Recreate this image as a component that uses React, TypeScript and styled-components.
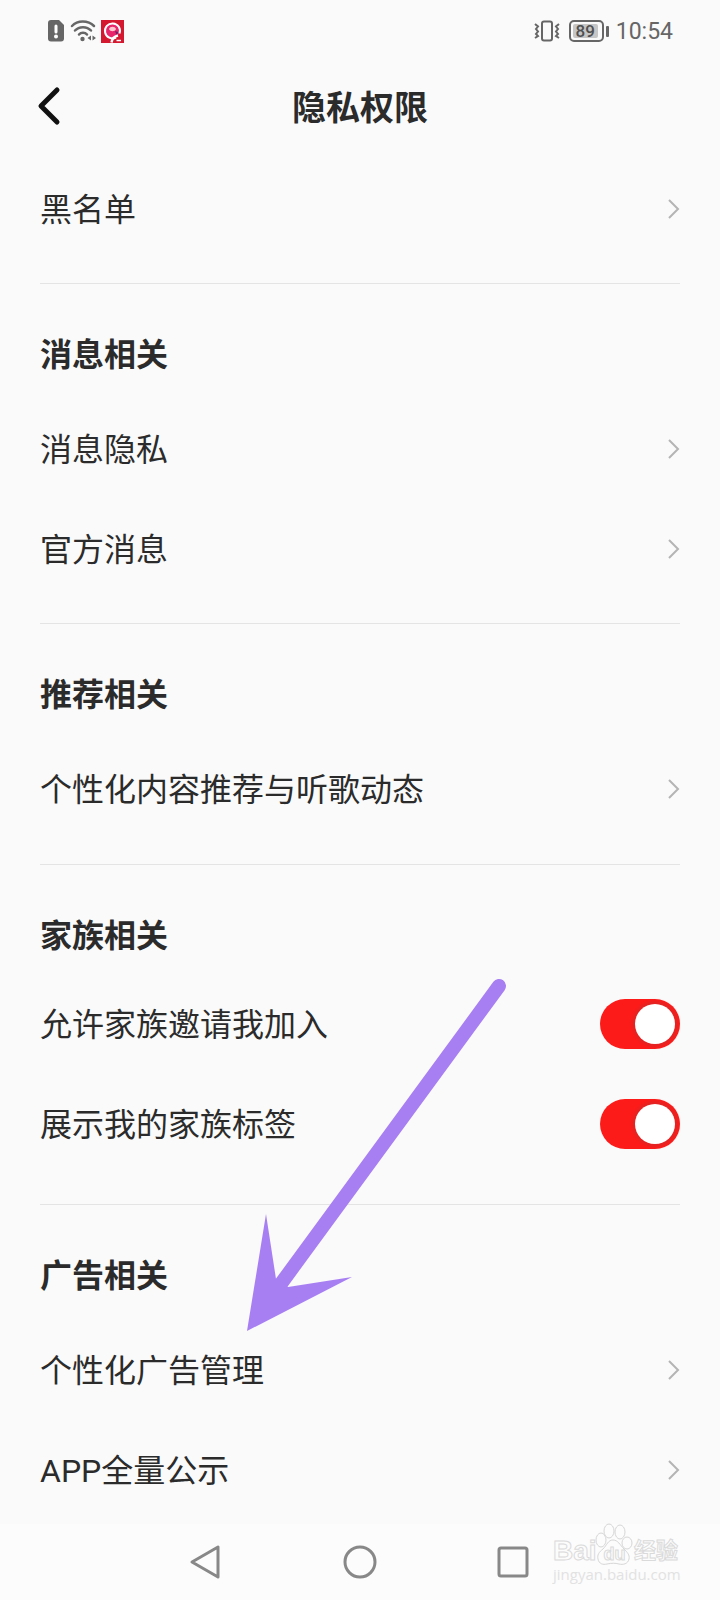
import React, { useId, useState } from 'react';
import styled, { createGlobalStyle } from 'styled-components';

const GlobalStyle = createGlobalStyle`
  *, *::before, *::after { box-sizing: border-box; }
  body {
    margin: 0;
    background: #fafafa;
    color: #2b2b2b;
    font-family: Roboto, "Noto Sans CJK SC", sans-serif;
  }
  button, input { font: inherit; color: inherit; }
`;

const Page = styled.div`
  display: flex;
  flex-direction: column;
  min-height: 100vh;
  overflow-x: hidden;
`;

const StatusBar = styled.div`
  display: flex;
  align-items: center;
  justify-content: space-between;
  height: 62px;
  padding: 0 47px;
  color: #666;
`;

const StatusGroup = styled.div<{ $gap: number }>`
  display: flex;
  align-items: center;
  gap: ${(p) => p.$gap}px;
`;

const Battery = styled.div`
  display: flex;
  align-items: center;
  gap: 2px;
  margin-left: 2px;
  &::after {
    content: "";
    width: 3px;
    height: 11px;
    border-radius: 1px;
    background: #666;
  }
`;

const BatteryBody = styled.div`
  display: flex;
  width: 35px;
  height: 22px;
  padding: 2px;
  border: 2px solid #666;
  border-radius: 5px;
`;

const BatteryLevel = styled.span`
  display: flex;
  align-items: center;
  justify-content: center;
  width: 25px;
  border-radius: 2px;
  background: #c6c6c6;
  color: #505050;
  font-size: 17px;
  font-weight: 500;
  line-height: 14px;
`;

const Clock = styled.time`
  padding-top: 2px;
  font-size: 23px;
  line-height: 28px;
`;

const Header = styled.header`
  display: grid;
  grid-template-columns: 80px 1fr 80px;
  align-items: center;
  height: 90px;
`;

const BackButton = styled.button`
  display: flex;
  align-items: center;
  height: 88px;
  padding: 0 0 2px 36px;
  border: 0;
  background: none;
`;

const Title = styled.h1`
  margin: 0;
  padding-top: 2px;
  text-align: center;
  font-size: 34px;
  font-weight: 700;
  line-height: 48px;
`;

const Main = styled.main`
  flex: 1;
  padding: 7px 40px 0;
`;

const Section = styled.section<{ $end?: number }>`
  position: relative;
  padding-bottom: ${(p) => p.$end ?? 24}px;
  & + & { border-top: 1px solid #e4e4e4; }
  &:last-child { padding-bottom: 4px; }
`;

const SectionTitle = styled.h2<{ $compact?: boolean }>`
  margin: 0;
  padding: 47px 0 ${(p) => (p.$compact ? 14 : 20)}px;
  font-size: 32px;
  font-weight: 700;
  line-height: 48px;
`;

const LinkRow = styled.button`
  display: flex;
  align-items: center;
  justify-content: space-between;
  width: 100%;
  height: 100px;
  padding: 0;
  border: 0;
  background: none;
  text-align: left;
`;

const SwitchRow = styled.div`
  display: flex;
  align-items: center;
  justify-content: space-between;
  height: 100px;
`;

const RowText = styled.span`
  padding-top: 2px;
  font-size: 32px;
  line-height: 48px;
`;

const Switch = styled.input`
  appearance: none;
  display: flex;
  align-items: center;
  width: 80px;
  height: 50px;
  margin: 0;
  padding: 0 5px;
  border-radius: 25px;
  background: #d0d0d0;
  &::before {
    content: "";
    width: 40px;
    height: 40px;
    border-radius: 50%;
    background: #fff;
  }
  &:checked {
    justify-content: flex-end;
    background: #fd1b19;
  }
  &:checked::before { box-shadow: 0 0 3px 3px #e32423; }
`;

const Arrow = styled.svg`
  position: absolute;
  left: 205px;
  bottom: -129px;
  pointer-events: none;
  z-index: 1;
`;

const NavBar = styled.nav`
  position: relative;
  display: flex;
  align-items: center;
  justify-content: center;
  gap: 93px;
  height: 77px;
  padding-bottom: 2px;
  background: #fcfcfc;
`;

const NavButton = styled.button`
  display: flex;
  align-items: center;
  justify-content: center;
  width: 60px;
  height: 60px;
  padding: 0;
  border: 0;
  background: none;
`;

const Watermark = styled.div`
  position: absolute;
  right: 35px;
  top: -2px;
  width: 132px;
  color: #fcfcfc;
  pointer-events: none;
`;

const Brand = styled.div`
  display: flex;
  align-items: flex-end;
  height: 44px;
  font-weight: 700;
  line-height: 30px;
  -webkit-text-stroke: 1px #dadada;
`;

const BrandLatin = styled.span`
  width: 42px;
  font-family: "Liberation Sans", sans-serif;
  font-size: 28px;
`;

const BrandPaw = styled.span`
  position: relative;
  width: 39px;
  height: 44px;
`;

const PawText = styled.span`
  position: absolute;
  inset: 20px 0 0;
  text-align: center;
  font-family: "Liberation Sans", sans-serif;
  font-size: 18px;
  line-height: 24px;
`;

const BrandCjk = styled.span`
  font-size: 22px;
`;

const SiteName = styled.div`
  font-family: "Open Sans", sans-serif;
  font-size: 15px;
  line-height: 16px;
  color: #e2e2e2;
`;

function Chevron() {
  return (
    <svg width="14" height="22" viewBox="0 0 14 22" fill="none" stroke="#b4b4b4" strokeWidth="2" aria-hidden="true">
      <path d="M3 2l9 9-9 9" />
    </svg>
  );
}

function Row({ label }: { label: string }) {
  return (
    <LinkRow type="button">
      <RowText>{label}</RowText>
      <Chevron />
    </LinkRow>
  );
}

function Toggle({ label }: { label: string }) {
  const id = useId();
  const [on, setOn] = useState(true);
  return (
    <SwitchRow>
      <RowText as="label" htmlFor={id}>{label}</RowText>
      <Switch id={id} type="checkbox" role="switch" checked={on} onChange={(e) => setOn(e.target.checked)} />
    </SwitchRow>
  );
}

function SimAlertIcon() {
  return (
    <svg width="18" height="22" viewBox="0 0 18 22" aria-hidden="true">
      <path d="M4 0h8l5 5v13.500a3 3 0 0 1-3 3H4a3 3 0 0 1-3-3V3a3 3 0 0 1 3-3z" fill="#666" />
      <path d="M9 6v6" stroke="#fff" strokeWidth="3" strokeLinecap="round" />
      <circle cx="9" cy="16.500" r="2" fill="#fff" />
    </svg>
  );
}

function WifiIcon() {
  return (
    <svg width="26" height="22" viewBox="0 0 26 22" fill="none" stroke="#666" strokeWidth="2.500" strokeLinecap="round" aria-hidden="true">
      <path d="M2 6c5.500-6 16-6 22 0M5 10.500c4-4.500 12-4.500 16 0M9 14.500c2-2.500 6-2.500 8 0" />
      <circle cx="12.500" cy="19" r="2.200" fill="#666" stroke="none" />
      <path d="M21 15.500v5l-3.500-2.500zM22.500 15.500v5l3.500-2.500z" fill="#666" stroke="none" />
    </svg>
  );
}

function AppBadge() {
  return (
    <svg width="23" height="23" viewBox="0 0 23 23" aria-hidden="true">
      <path fill="#d3182f" d="M0 0h23v23H0z" />
      <path d="M15 17.500A7.500 7.500 0 1 1 18.500 13.500" fill="#e8246a" stroke="#fff" strokeWidth="2" />
      <path d="M8 9c1-3 6-3 7 0-1 3-6 3-7 0z" fill="#fbc7cf" />
      <path d="M14 11l3 1-1 4z" fill="#6b1f68" />
      <path d="M17 15.500c-4 1-6 3-6.500 7" stroke="#fff" strokeWidth="2.500" fill="none" />
      <path d="M15.500 20.500h4.500" stroke="#fff" strokeWidth="1.500" />
    </svg>
  );
}

function VibrateIcon() {
  return (
    <svg width="26" height="22" viewBox="0 0 26 22" fill="none" stroke="#666" strokeWidth="2" aria-hidden="true">
      <rect x="8" y="1.500" width="10" height="19" rx="2" />
      <path d="M1 4l3 2.500-2 2.500 2 2.500-2 2.500 2 2-3 2M25 4l-3 2.500 2 2.500-2 2.500 2 2.500-2 2 3 2" />
    </svg>
  );
}

export default function App() {
  return (
    <>
      <GlobalStyle />
      <Page>
        <StatusBar>
          <StatusGroup $gap={5}>
            <SimAlertIcon />
            <WifiIcon />
            <AppBadge />
          </StatusGroup>
          <StatusGroup $gap={7}>
            <VibrateIcon />
            <Battery>
              <BatteryBody>
                <BatteryLevel>89</BatteryLevel>
              </BatteryBody>
            </Battery>
            <Clock>10:54</Clock>
          </StatusGroup>
        </StatusBar>

        <Header>
          <BackButton type="button" aria-label="返回">
            <svg width="26" height="40" viewBox="0 0 26 40" fill="none" stroke="#111" strokeWidth="5" strokeLinecap="round" strokeLinejoin="round" aria-hidden="true">
              <path d="M21 4L5 20l16 16" />
            </svg>
          </BackButton>
          <Title>隐私权限</Title>
        </Header>

        <Main>
          <Section>
            <Row label="黑名单" />
          </Section>
          <Section>
            <SectionTitle>消息相关</SectionTitle>
            <Row label="消息隐私" />
            <Row label="官方消息" />
          </Section>
          <Section $end={25}>
            <SectionTitle>推荐相关</SectionTitle>
            <Row label="个性化内容推荐与听歌动态" />
          </Section>
          <Section $end={30}>
            <SectionTitle $compact>家族相关</SectionTitle>
            <Toggle label="允许家族邀请我加入" />
            <Toggle label="展示我的家族标签" />
            <Arrow width="264" height="356" viewBox="0 0 264 356" aria-hidden="true">
              <path d="M254 9L35 308" stroke="#a87ff3" strokeWidth="14" strokeLinecap="round" />
              <path d="M2 354L21 237 31 302 43 310 107 300z" fill="#a87ff3" />
            </Arrow>
          </Section>
          <Section>
            <SectionTitle>广告相关</SectionTitle>
            <Row label="个性化广告管理" />
            <Row label="APP全量公示" />
          </Section>
        </Main>

        <NavBar>
          <NavButton type="button" aria-label="后退">
            <svg width="36" height="36" viewBox="0 0 36 36" fill="none" stroke="#888" strokeWidth="3" strokeLinejoin="round" aria-hidden="true">
              <path d="M29 3v30L3 18z" />
            </svg>
          </NavButton>
          <NavButton type="button" aria-label="主屏幕">
            <svg width="36" height="36" viewBox="0 0 36 36" fill="none" stroke="#888" strokeWidth="3" aria-hidden="true">
              <circle cx="18" cy="18" r="15" />
            </svg>
          </NavButton>
          <NavButton type="button" aria-label="最近任务">
            <svg width="32" height="32" viewBox="0 0 32 32" fill="none" stroke="#888" strokeWidth="3" aria-hidden="true">
              <rect x="2" y="2" width="28" height="28" rx="2" />
            </svg>
          </NavButton>
          <Watermark>
            <Brand>
              <BrandLatin>Bai</BrandLatin>
              <BrandPaw>
                <svg width="38" height="44" viewBox="0 0 38 44" fill="#fcfcfc" stroke="#d6d6d6" strokeWidth="1" aria-hidden="true">
                  <ellipse cx="6" cy="18" rx="5" ry="7" />
                  <ellipse cx="14" cy="9" rx="5" ry="7" />
                  <ellipse cx="25" cy="10" rx="5" ry="7" />
                  <ellipse cx="32" cy="21" rx="5" ry="6" />
                  <path d="M18 18c-5 0-6 5-10 9-4 3-6 6-5 10 1 5 5 6 9 5 5-1 8-1 12 0s9 0 10-5c1-4-2-7-5-10-4-4-6-9-11-9z" />
                </svg>
                <PawText>du</PawText>
              </BrandPaw>
              <BrandCjk>经验</BrandCjk>
            </Brand>
            <SiteName>jingyan.baidu.com</SiteName>
          </Watermark>
        </NavBar>
      </Page>
    </>
  );
}
